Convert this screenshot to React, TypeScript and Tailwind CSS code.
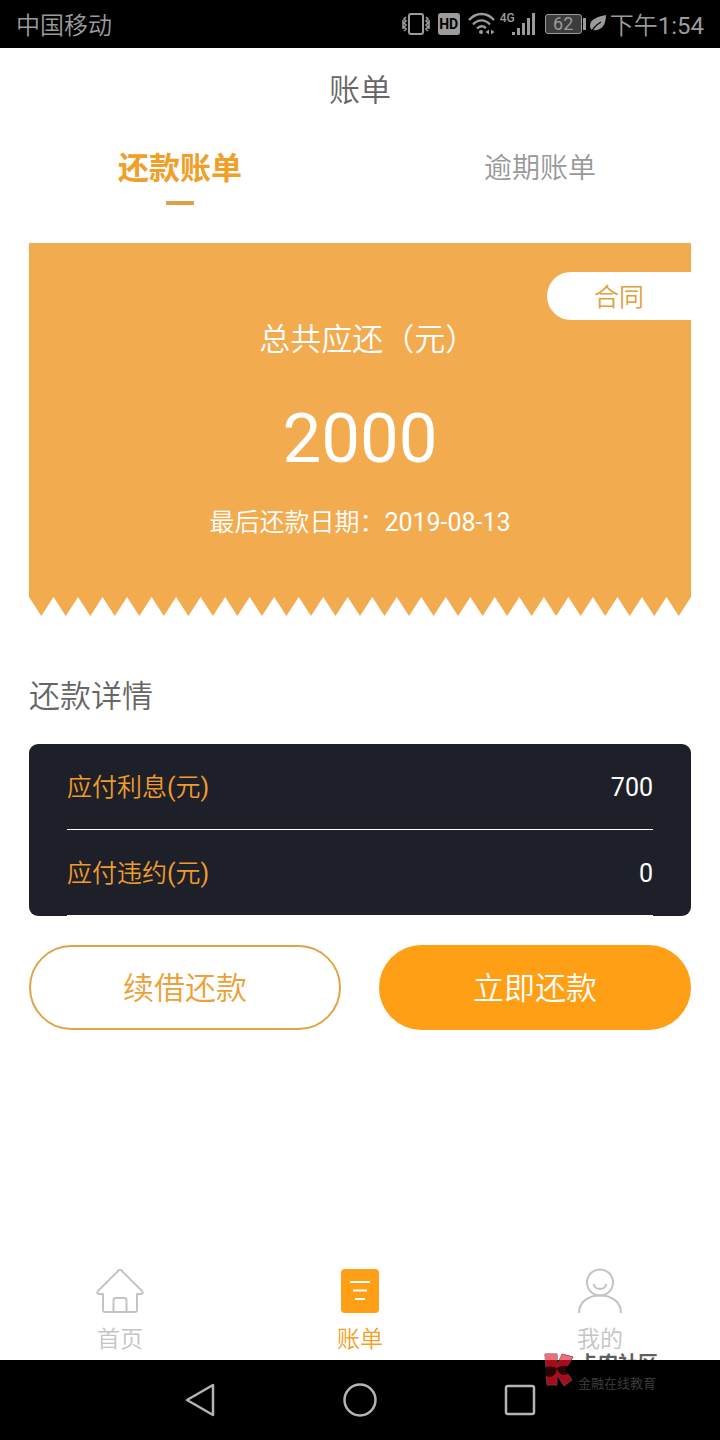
import type { ReactNode } from 'react';

const TEETH = 27;

const details = [
  { label: '应付利息', value: '700' },
  { label: '应付违约', value: '0' },
];

const StatusBar = () => (
  <div className="flex h-12 items-center justify-between bg-black px-4 text-[24px] leading-8 text-[#9b9b9b]">
    <span className="pt-[3px]">中国移动</span>
    <div className="flex items-center">
      <svg className="mr-2 h-6 w-7" viewBox="0 0 28 24" fill="none" stroke="currentColor" strokeWidth="2">
        <rect x="7" y="2" width="14" height="20" rx="2" />
        <path d="M4 5 2 7l2 2-2 2 2 2-2 2 2 2-2 2M1 8v9M24 5l2 2-2 2 2 2-2 2 2 2-2 2 2 2M27 8v9" strokeWidth="1.6" />
      </svg>
      <span className="mr-2 flex h-[22px] w-[22px] items-center justify-center rounded-[3px] bg-[#9b9b9b] text-[14px] font-bold leading-none text-black">
        HD
      </span>
      <svg className="mr-1 h-6 w-7" viewBox="0 0 28 24" fill="none" stroke="currentColor" strokeWidth="2.4">
        <path d="M1 8C8 0 19 0 26 8M5 12.500C10 7 17 7 22 12.500M9 16.500C12 13.500 15 13.500 18 16" />
        <circle cx="13" cy="20" r="2" fill="currentColor" stroke="none" />
        <path d="M21 17.500v5l-3.500-2.500zM23 17.500v5l3.500-2.500z" fill="currentColor" stroke="none" />
      </svg>
      <div className="mr-[10px] flex h-6 items-start">
        <span className="text-[12px] font-medium leading-3">4G</span>
        <svg className="-ml-1 h-6 w-6" viewBox="0 0 24 24" fill="currentColor">
          <path d="M1 20h3v3H1zM6 16h3v7H6zM11 11h3v12h-3zM16 6h3v17h-3zM21 1h3v22h-3z" />
        </svg>
      </div>
      <div className="flex h-5 w-[37px] items-center justify-center rounded-[3px] border border-[#9b9b9b] bg-[#3c3c3c] text-[18px] font-normal leading-none">
        62
      </div>
      <div className="ml-px mr-1 h-3 w-[3px] bg-[#9b9b9b]" />
      <svg className="mr-1 h-[18px] w-4" viewBox="0 0 16 18">
        <path d="M16 0C7 2 0 4 0 11c0 2 1 3 2 4 9 1 14-4 14-15Z" fill="currentColor" />
        <path d="M1 18C3 13 6 10 11 7" fill="none" stroke="#000" strokeWidth="1.200" />
      </svg>
      <span className="pt-[3px]">
        下午<span className="font-normal">1:54</span>
      </span>
    </div>
  </div>
);

const SummaryCard = () => (
  <section className="text-white">
    <div className="flex flex-col items-center bg-[#f2ac4f] pb-14 pt-[29px]">
      <button
        type="button"
        className="h-12 w-36 self-end rounded-l-full bg-white pt-1 text-[25px] leading-[44px] text-[#e0a03c]"
      >
        合同
      </button>
      <p className="text-[31px] leading-10">
        总共应还（元<span className="[font-feature-settings:'halt']">）</span>
      </p>
      <p className="mt-[33px] text-[69px] font-normal leading-[92px]">2000</p>
      <p className="mt-5 text-[25px] leading-9">
        最后还款日期：<span className="font-normal">2019-08-13</span>
      </p>
    </div>
    <svg
      className="block h-[19px] w-full"
      viewBox={`0 0 ${TEETH * 2} 2`}
      preserveAspectRatio="none"
      fill="#f2ac4f"
    >
      <path d={`M0 0${'l1 2 1-2'.repeat(TEETH)}z`} />
    </svg>
  </section>
);

const NavItem = ({ label, active, children }: { label: string; active?: boolean; children: ReactNode }) => (
  <a
    href="#"
    className={
      active
        ? 'flex flex-1 flex-col items-center gap-[10px] text-[#f59f23]'
        : 'flex flex-1 flex-col items-center gap-[10px] text-[#c4c4c4]'
    }
  >
    {children}
    <span className="text-[23px] leading-8">{label}</span>
  </a>
);

const Watermark = () => (
  <div className="pointer-events-none absolute -top-2 right-[62px] flex gap-1">
    <svg className="h-9 w-8" viewBox="0 0 32 36">
      <path d="M3 2h12v12l5-12 11 3-8 13 7 10-8 6-7-11v10H5z" fill="#a80c1b" stroke="#6e3a3e" strokeWidth="1" />
      <path d="M3 2h12v6H3zM20 2l11 3-2 3H17z" fill="#e8707c" />
      <path d="M1 16q7-3 14 0 6-4 14-1-1 9-8 8-4-1-6-6-2 8-8 8-6-1-6-9Z" fill="#000" opacity="0.75" />
    </svg>
    <div>
      <p className="text-[20px] font-bold leading-6 text-black/65">卡农社区</p>
      <p className="text-[13px] leading-4 text-[#3f3f3f]">金融在线教育</p>
    </div>
  </div>
);

export default function App() {
  return (
    <div className="flex min-h-screen flex-col bg-white font-['Roboto','Noto_Sans_CJK_SC',sans-serif] font-[350]">
      <StatusBar />

      <h1 className="pt-[21px] text-center text-[31px] leading-[44px] text-[#666]">账单</h1>
      <nav className="mt-8 flex h-[60px] items-start">
        <a href="#" className="flex flex-1 flex-col items-center text-[#f0a029]">
          <span className="text-[31px] font-bold leading-[48px]">还款账单</span>
          <span className="mt-2 h-1 w-7 bg-[#dea344]" />
        </a>
        <a href="#" className="flex-1 text-center text-[28px] leading-[48px] text-[#999]">
          逾期账单
        </a>
      </nav>

      <main className="mt-[38px] px-[29px]">
        <SummaryCard />

        <h2 className="mt-[57px] text-[31px] leading-[48px] text-[#666]">还款详情</h2>
        <dl className="mt-[23px] rounded-[9px] bg-[#1e2029] px-[38px] text-[25px]">
          {details.map((item) => (
            <div
              key={item.label}
              className="flex h-[86px] items-center justify-between border-b border-white pt-[3px]"
            >
              <dt className="text-[#f09b2c]">
                {item.label}
                <span className="font-normal">(</span>元<span className="font-normal">)</span>
              </dt>
              <dd className="font-normal text-white">{item.value}</dd>
            </div>
          ))}
        </dl>

        <div className="mt-[29px] grid grid-cols-2 gap-[38px] text-[31px]">
          <button type="button" className="h-[85px] rounded-full border-2 border-[#e0a448] pt-1 text-[#eda035]">
            续借还款
          </button>
          <button type="button" className="h-[85px] rounded-full bg-[#ff9f15] pt-1 text-white">
            立即还款
          </button>
        </div>
      </main>

      <footer className="mt-auto">
        <nav className="flex pb-1">
          <NavItem label="首页">
            <svg className="h-[46px] w-12" viewBox="0 0 48 46" fill="none" stroke="currentColor" strokeWidth="2" strokeLinejoin="round">
              <path d="M22.500 2.500q1.500-1.500 3 0L46 23q2 3-1 3h-4v16q0 2-2 2H9q-2 0-2-2V26H3q-3 0-1-3Z" />
              <path d="M17.500 44V32q0-2 2-2h9q2 0 2 2v12" />
            </svg>
          </NavItem>
          <NavItem label="账单" active>
            <svg className="h-[46px] w-[38px]" viewBox="0 0 38 46">
              <rect y="1" width="38" height="44" rx="4" fill="#ff9f15" />
              <path d="M9 14h20M12 22.500h14M14 31h10" stroke="#fff" strokeWidth="2" />
            </svg>
          </NavItem>
          <NavItem label="我的">
            <svg className="h-[46px] w-12" viewBox="0 0 48 46" fill="none" stroke="currentColor" strokeWidth="2">
              <circle cx="24" cy="14.500" r="13" />
              <path d="M17.500 16c2 6.500 11 6.500 13 0" />
              <path d="M3 45C3 34 12 27.500 24 27.500S45 34 45 45" />
            </svg>
          </NavItem>
        </nav>
        <div className="relative flex h-20 items-center justify-center gap-[126px] bg-black text-[#b4b4b4]">
          <button type="button" aria-label="Back">
            <svg className="h-9 w-8" viewBox="0 0 32 36" fill="none" stroke="currentColor" strokeWidth="2.500" strokeLinejoin="round">
              <path d="M3 18 29 3v30Z" />
            </svg>
          </button>
          <button type="button" aria-label="Home">
            <svg className="h-9 w-9" viewBox="0 0 36 36" fill="none" stroke="currentColor" strokeWidth="2.500">
              <circle cx="18" cy="18" r="15.500" />
            </svg>
          </button>
          <button type="button" aria-label="Recent apps">
            <svg className="h-8 w-8" viewBox="0 0 32 32" fill="none" stroke="currentColor" strokeWidth="2.500">
              <rect x="2" y="2" width="28" height="28" rx="2" />
            </svg>
          </button>
          <Watermark />
        </div>
      </footer>
    </div>
  );
}
